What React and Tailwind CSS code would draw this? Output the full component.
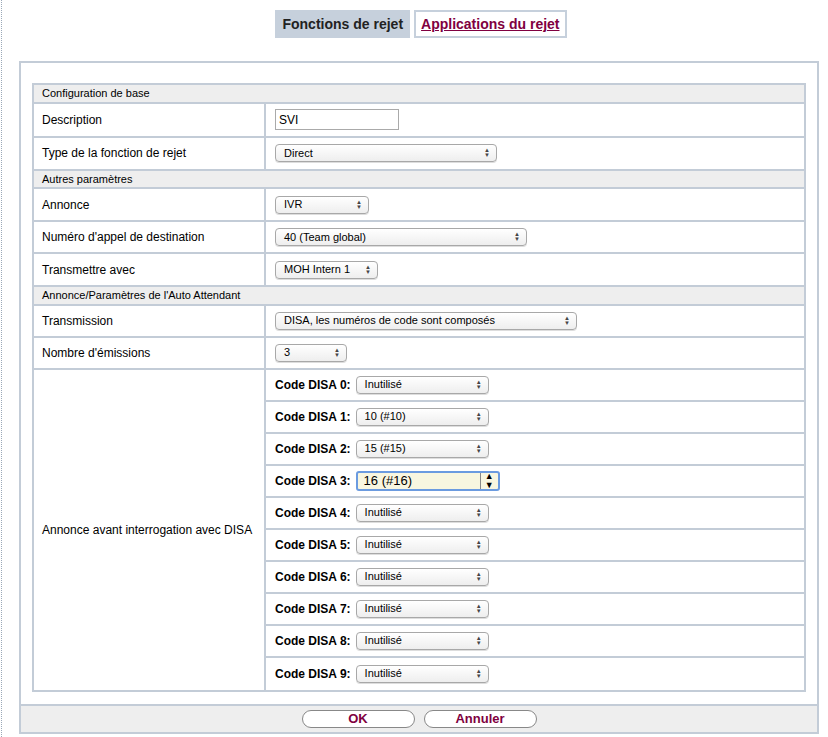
const F = { fontFamily: '"Liberation Sans", Arial, sans-serif' };

function Sel({ w, text, focus }) {
  if (focus)
    return (
      <div className="flex items-center h-[20px] border-2 border-[#6b9be0] rounded-[3px] bg-[#f8f6e0] text-[13px]" style={{ width: w }}>
        <span className="flex-1 pl-[6px] text-black">{text}</span>
        <span className="w-[18px] h-full border-l border-[#888] flex items-center justify-center text-[9px] leading-none flex-col">
          <span>▲</span><span>▼</span>
        </span>
      </div>
    );
  return (
    <div className="flex items-center h-[18px] border border-[#a8a8a8] rounded-[4px] bg-gradient-to-b from-white to-[#eeeeee] text-[11px] shadow-[0_1px_0_#ddd]" style={{ width: w }}>
      <span className="flex-1 pl-[8px] text-black">{text}</span>
      <span className="pr-[6px] text-[6px] leading-[5px] flex flex-col text-[#444]"><span>▲</span><span>▼</span></span>
    </div>
  );
}

const Head = ({ t }) => (
  <tr><td colSpan={2} className="bg-[#eeeeee] border border-[#c3ccd7] h-[17px] pl-[8px] text-[11px] text-black">{t}</td></tr>
);
const Row = ({ label, h = 33, children }) => (
  <tr style={{ height: h }}>
    <td className="border-2 border-[#c3ccd7] pl-[8px] text-[12px] text-black w-[232px]">{label}</td>
    <td className="border-2 border-[#c3ccd7] pl-[9px]">{children}</td>
  </tr>
);

const disa = ["Inutilisé", "10 (#10)", "15 (#15)", "16 (#16)", "Inutilisé", "Inutilisé", "Inutilisé", "Inutilisé", "Inutilisé", "Inutilisé"];

export default function App() {
  return (
    <div className="relative w-[828px] h-[737px] bg-white overflow-hidden" style={F}>
      <div className="absolute left-[1px] top-0 bottom-0 border-l border-dotted border-[#9aa8b8]" />
      <div className="flex justify-center pt-[10px] gap-[4px] pl-[14px]">
        <div className="bg-[#c6d0dc] h-[28px] px-[7px] flex items-center text-[14px] font-bold text-[#222]">Fonctions de rejet</div>
        <div className="border-2 border-[#c6d0dc] h-[28px] px-[5px] flex items-center text-[14px] font-bold text-[#800040] underline">Applications du rejet</div>
      </div>
      <div className="mt-[23px] ml-[19px] w-[800px] border-2 border-[#c3ccd7] border-b-0 pt-[20px] px-[11px] pb-[12px]">
        <table className="w-full border-collapse border-2 border-[#c3ccd7]">
          <tbody>
            <Head t="Configuration de base" />
            <Row label="Description" h={34}>
              <div className="w-[124px] h-[21px] border border-[#aaa] text-[12px] pl-[3px] flex items-center">SVI</div>
            </Row>
            <Row label="Type de la fonction de rejet"><Sel w={222} text="Direct" /></Row>
            <Head t="Autres paramètres" />
            <Row label="Annonce"><Sel w={94} text="IVR" /></Row>
            <Row label="Numéro d'appel de destination" h={32}><Sel w={252} text="40 (Team global)" /></Row>
            <Row label="Transmettre avec"><Sel w={103} text="MOH Intern 1" /></Row>
            <Head t="Annonce/Paramètres de l'Auto Attendant" />
            <Row label="Transmission" h={32}><Sel w={302} text="DISA, les numéros de code sont composés" /></Row>
            <Row label="Nombre d'émissions" h={32}><Sel w={72} text="3" /></Row>
            <tr>
              <td className="border-2 border-[#c3ccd7] pl-[8px] text-[12px] text-black">Annonce avant interrogation avec DISA</td>
              <td className="border-2 border-[#c3ccd7] p-0">
                {disa.map((d, i) => (
                  <div key={i} className={`h-[32px] flex items-center pl-[9px] gap-[5px] ${i < 9 ? "border-b-2 border-[#c3ccd7]" : ""}`}>
                    <span className="text-[12px] font-bold text-black">Code DISA {i}:</span>
                    <Sel w={i === 3 ? 144 : 133} text={d} focus={i === 3} />
                  </div>
                ))}
              </td>
            </tr>
          </tbody>
        </table>
      </div>
      <div className="ml-[19px] w-[800px] h-[30px] bg-[#eeeeee] border-2 border-[#c3ccd7] flex items-center justify-center gap-[9px]">
        <button className="w-[113px] h-[18px] rounded-full border border-[#888] bg-white text-[13px] font-bold text-[#800040] leading-none">OK</button>
        <button className="w-[113px] h-[18px] rounded-full border border-[#888] bg-white text-[13px] font-bold text-[#800040] leading-none">Annuler</button>
      </div>
    </div>
  );
}
